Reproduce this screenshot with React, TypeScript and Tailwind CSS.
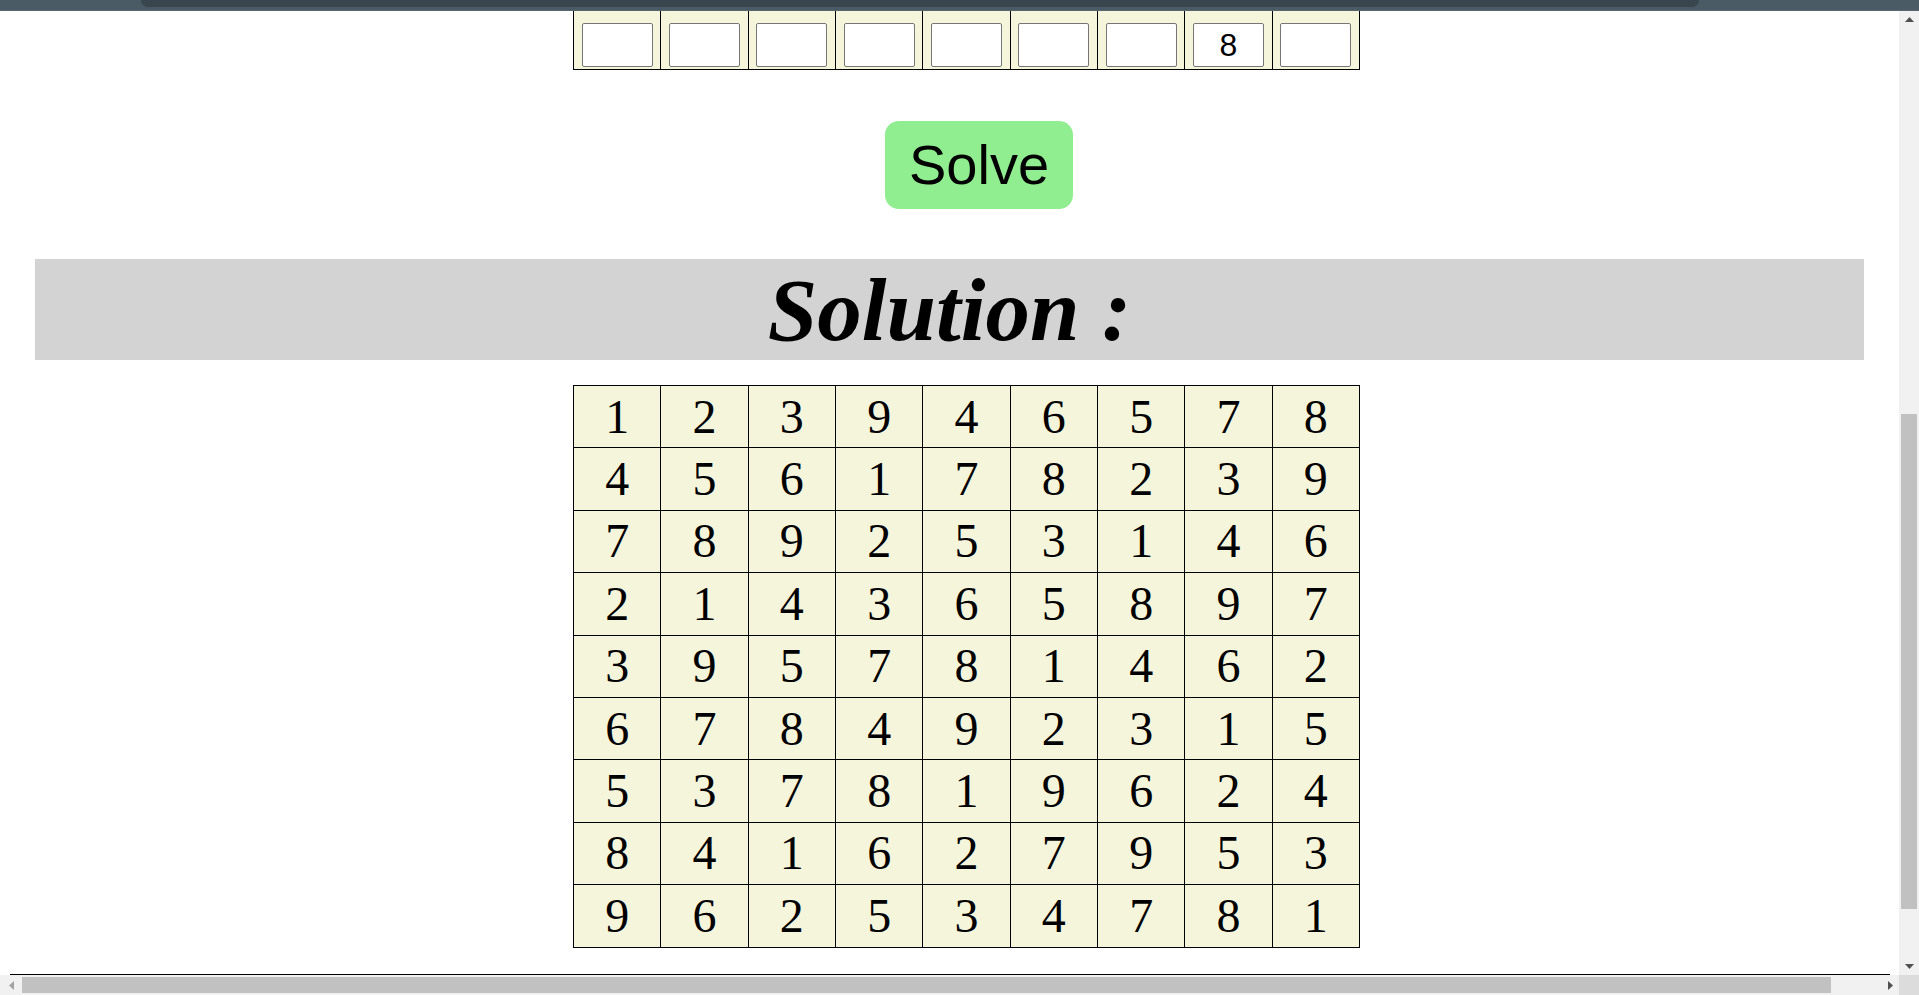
import React from "react";

const solution: number[][] = [
  [1, 2, 3, 9, 4, 6, 5, 7, 8],
  [4, 5, 6, 1, 7, 8, 2, 3, 9],
  [7, 8, 9, 2, 5, 3, 1, 4, 6],
  [2, 1, 4, 3, 6, 5, 8, 9, 7],
  [3, 9, 5, 7, 8, 1, 4, 6, 2],
  [6, 7, 8, 4, 9, 2, 3, 1, 5],
  [5, 3, 7, 8, 1, 9, 6, 2, 4],
  [8, 4, 1, 6, 2, 7, 9, 5, 3],
  [9, 6, 2, 5, 3, 4, 7, 8, 1],
];

const inputRow = ["", "", "", "", "", "", "", "8", ""];

export default function App() {
  return (
    <div className="w-[1919px] h-[995px] overflow-hidden bg-white flex flex-col" style={{ fontFamily: '"Liberation Sans", Arial, sans-serif' }}>
      {/* top browser bar */}
      <div className="h-[11px] bg-[#4b5b65] shrink-0 flex border-b border-[#56666f]">
        <div className="ml-[141px] w-[1558px] h-[7px] bg-[#3a464e] rounded-b-[9px]" />
      </div>

      <div className="flex flex-1 min-h-0">
        {/* page viewport */}
        <div className="flex-1 min-w-0 overflow-hidden flex flex-col">
          {/* last input row (scrolled, top cut off) */}
          <div className="ml-[573px] w-[787px] grid grid-cols-9 border-l border-b border-black shrink-0">
            {inputRow.map((v, i) => (
              <div key={i} className="h-[58px] bg-[#f5f5dc] border-r border-black flex items-end justify-center pb-[2px]">
                <input
                  readOnly
                  value={v}
                  className="w-[71px] h-[44px] p-0 bg-white border border-[#767676] rounded-[2px] text-center text-[32px] leading-none text-black outline-none"
                  style={{ fontFamily: '"Liberation Sans", Arial, sans-serif' }}
                />
              </div>
            ))}
          </div>

          {/* Solve button */}
          <button className="ml-[885px] mt-[51px] w-[188px] h-[88px] shrink-0 bg-[#90ee90] rounded-[14px] text-[56px] leading-none text-black flex items-center justify-center">
            Solve
          </button>

          {/* Solution header */}
          <div className="ml-[35px] mt-[50px] w-[1829px] h-[101px] shrink-0 bg-[#d3d3d3] flex items-center justify-center">
            <h2
              className="text-[89px] leading-[100px] font-bold italic text-black"
              style={{ fontFamily: '"Liberation Serif", "Times New Roman", serif' }}
            >
              Solution :
            </h2>
          </div>

          {/* Solution grid */}
          <div className="ml-[573px] mt-[25px] w-[787px] grid grid-cols-9 border-l border-t border-black shrink-0">
            {solution.flat().map((n, i) => (
              <div
                key={i}
                className="h-[62.4px] bg-[#f5f5dc] border-r border-b border-black flex items-center justify-center text-[48px] text-black"
                style={{ fontFamily: '"Liberation Serif", "Times New Roman", serif' }}
              >
                {n}
              </div>
            ))}
          </div>

          {/* bottom rule */}
          <div className="ml-[10px] mt-[26px] w-[1880px] h-[2px] bg-black shrink-0" />
        </div>

        {/* vertical scrollbar */}
        <div className="w-[20px] shrink-0 bg-[#f1f1f1] flex flex-col items-center">
          <div className="h-[17px] flex items-center justify-center">
            <svg width="9" height="5" viewBox="0 0 9 5"><path d="M4.5 0 L9 5 L0 5 Z" fill="#505050" /></svg>
          </div>
          <div className="h-[386px]" />
          <div className="w-[16px] h-[495px] bg-[#c1c1c1]" />
          <div className="flex-1" />
          <div className="h-[17px] flex items-center justify-center">
            <svg width="9" height="5" viewBox="0 0 9 5"><path d="M0 0 L9 0 L4.5 5 Z" fill="#505050" /></svg>
          </div>
        </div>
      </div>

      {/* horizontal scrollbar */}
      <div className="h-[20px] shrink-0 flex bg-[#f1f1f1]">
        <div className="w-[22px] flex items-center justify-center">
          <svg width="5" height="9" viewBox="0 0 5 9"><path d="M5 0 L5 9 L0 4.5 Z" fill="#a3a3a3" /></svg>
        </div>
        <div className="flex-1 flex items-center">
          <div className="w-[1809px] h-[16px] bg-[#c1c1c1]" />
        </div>
        <div className="w-[18px] flex items-center justify-center">
          <svg width="5" height="9" viewBox="0 0 5 9"><path d="M0 0 L5 4.5 L0 9 Z" fill="#505050" /></svg>
        </div>
        <div className="w-[20px] bg-[#dcdcdc]" />
      </div>
    </div>
  );
}
